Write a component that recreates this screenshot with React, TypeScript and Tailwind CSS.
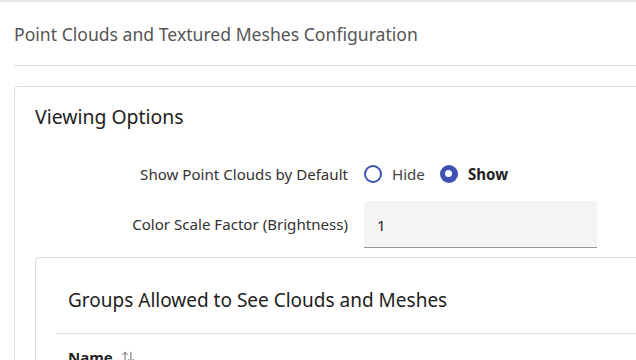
import { ArrowUpDown } from "lucide-react";

function Radio({ checked, label }: { checked?: boolean; label: string }) {
  return (
    <label className="flex items-center gap-[10px]">
      {checked ? (
        <span className="flex h-[18px] w-[18px] items-center justify-center rounded-full bg-[#3f51b5]">
          <span className="h-[7px] w-[7px] rounded-full bg-white" />
        </span>
      ) : (
        <span className="h-[18px] w-[18px] rounded-full border-2 border-[#3f51b5]" />
      )}
      <span className={checked ? "font-bold text-[#222]" : "text-[#444]"}>{label}</span>
    </label>
  );
}

export default function App() {
  return (
    <div
      className="h-[360px] w-full overflow-hidden border-t-2 border-[#e8e8e8] bg-white"
      style={{ fontFamily: '"Noto Sans", sans-serif' }}
    >
      {/* Page header */}
      <div className="pl-[14px]">
        <h1 className="pt-[20px] pb-[19px] text-[17.6px] leading-[24px] text-[#555]">
          Point Clouds and Textured Meshes Configuration
        </h1>
        <div className="border-t border-[#dedede]" />
      </div>

      {/* Viewing options card */}
      <div className="mt-[20px] ml-[14px] mr-[-20px] rounded-[4px] border border-[#dcdcdc] bg-white">
        <h2 className="px-[20px] pt-[16px] text-[19.4px] leading-[28px] text-[#222]">
          Viewing Options
        </h2>

        <div className="mt-[30px] grid grid-cols-[333px_1fr] items-center gap-x-[16px] gap-y-[14px] text-[15.1px] text-[#333]">
          <span className="text-right">Show Point Clouds by Default</span>
          <div className="flex h-[26px] items-center gap-[15px]">
            <Radio label="Hide" />
            <Radio checked label="Show" />
          </div>

          <span className="text-right">Color Scale Factor (Brightness)</span>
          <div className="flex h-[47px] w-[233px] items-center rounded-t-[4px] border-b border-[#9a9a9a] bg-[#f4f4f4] px-[13px] pt-[3px] text-[#222]">
            1
          </div>
        </div>

        {/* Groups card */}
        <div className="mt-[9px] ml-[20px] rounded-[4px] border border-[#dcdcdc] bg-white">
          <h3 className="px-[32px] pt-[29px] pb-[20px] text-[19px] leading-[26px] text-[#222]">
            Groups Allowed to See Clouds and Meshes
          </h3>
          <div className="ml-[20px] border-t border-[#dedede]" />
          <div className="flex items-center gap-[8px] px-[32px] pt-[12px] text-[15px] font-bold text-[#222]">
            Name
            <ArrowUpDown size={14} strokeWidth={1.5} className="text-[#555]" />
          </div>
        </div>
      </div>
    </div>
  );
}
